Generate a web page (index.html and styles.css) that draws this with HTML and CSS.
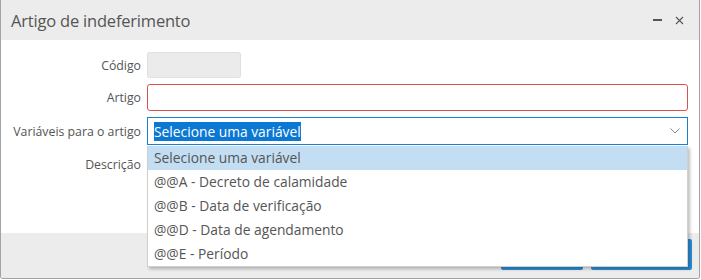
FILE: index.html
```html
<!DOCTYPE html>
<html lang="pt">
<head>
    <meta charset="UTF-8">
    <title>Artigo de indeferimento</title>
    <link rel="stylesheet" href="styles.css">
</head>
<body>
    <section class="win">
        <header class="win-head">
            <h1 class="win-title">Artigo de indeferimento</h1>
            <span class="win-min"></span>
            <svg class="win-close" width="9" height="9" viewBox="0 0 9 9">
                <path d="M1 1 L8 8 M8 1 L1 8" stroke="#555" stroke-width="1.1" fill="none"/>
            </svg>
        </header>

        <div class="win-body">
            <form class="form">
                <label class="lbl">Código</label>
                <input class="inp inp-code" type="text" disabled>

                <label class="lbl">Artigo</label>
                <input class="inp inp-error" type="text">

                <label class="lbl">Variáveis para o artigo</label>
                <div class="select">
                    <span class="select-val">Selecione uma variável</span>
                    <svg class="chev" width="10" height="6" viewBox="0 0 10 6">
                        <path d="M0.5 0.5 L5 5 L9.5 0.5" stroke="#888" stroke-width="1" fill="none"/>
                    </svg>
                </div>

                <label class="lbl lbl-top">Descrição</label>
                <textarea class="inp area"></textarea>
            </form>

            <ul class="drop">
                <li class="drop-item active">Selecione uma variável</li>
                <li class="drop-item">@@A - Decreto de calamidade</li>
                <li class="drop-item">@@B - Data de verificação</li>
                <li class="drop-item">@@D - Data de agendamento</li>
                <li class="drop-item">@@E - Período</li>
            </ul>
        </div>

        <footer class="win-foot">
            <button class="btn btn-save" type="submit">Salvar</button>
            <button class="btn btn-cancel" type="button">Cancelar</button>
        </footer>
    </section>
</body>
</html>
```

FILE: styles.css
```css
* {
    box-sizing: border-box;
}

body {
    margin: 0;
    font-family: "Open Sans", "Noto Sans", sans-serif;
    color: #555;
    background-color: #fff;
}

.win {
    position: relative;
    width: 700px;
    height: 279px;
    border: 1px solid #a3a3a3;
    border-top: 0;
    border-radius: 0 0 3px 3px;
    display: flex;
    flex-direction: column;
    overflow: hidden;
}

.win-head {
    height: 40px;
    background-color: #ececec;
    display: flex;
    align-items: center;
    padding: 0 15px 0 10px;
}

.win-title {
    flex: 1;
    margin: 0;
    font-size: 16.5px;
    font-weight: normal;
    color: #555;
    letter-spacing: -0.2px;
}

.win-min {
    width: 9px;
    height: 2px;
    background-color: #555;
    margin-right: 13px;
}

.win-body {
    position: relative;
    height: 193px;
    padding: 12px 10px 0 0;
}

.form {
    display: grid;
    grid-template-columns: 140px 541px;
    column-gap: 6px;
    row-gap: 6px;
    align-items: center;
}

.lbl {
    text-align: right;
    font-size: 12.3px;
    color: #555;
}

.lbl-top {
    align-self: start;
    padding-top: 5px;
}

.inp {
    height: 27px;
    border: 1px solid #ccc;
    border-radius: 3px;
    font-family: inherit;
    background: #fff;
}

.inp-code {
    width: 94px;
    height: 26px;
    background-color: #ebebeb;
    border: 1px dotted #d6d6d6;
}

.inp-error {
    border-color: #d9534f;
}

.select {
    height: 28px;
    border: 1px solid #1a7fd1;
    display: flex;
    align-items: center;
    padding: 0 7px 0 6px;
}

.select-val {
    font-size: 13.8px;
    line-height: 19px;
    background-color: #0b78d4;
    color: #fff;
}

.chev {
    margin-left: auto;
}

.area {
    height: 70px;
    resize: none;
}

.drop {
    position: absolute;
    left: 146px;
    top: 106px;
    width: 541px;
    margin: 0;
    padding: 0;
    list-style: none;
    background-color: #fff;
    border: 1px solid #d0d0d0;
    border-top: 0;
    box-shadow: 2px 2px 3px rgba(0, 0, 0, 0.25);
    z-index: 2;
}

.drop-item {
    height: 24px;
    line-height: 23px;
    padding-left: 6px;
    font-size: 13.8px;
    color: #555;
}

.drop-item.active {
    background-color: #c3def2;
}

.win-foot {
    flex: 1;
    background-color: #ececec;
    display: flex;
    justify-content: flex-end;
    align-items: flex-start;
    gap: 8px;
    padding: 6px 7px 0 0;
}

.btn {
    height: 31px;
    border: 0;
    border-radius: 2px;
    background-color: #2d8ed6;
    color: #fff;
    font-family: inherit;
    font-size: 14px;
}

.btn-save {
    width: 82px;
}

.btn-cancel {
    width: 101px;
}
```
